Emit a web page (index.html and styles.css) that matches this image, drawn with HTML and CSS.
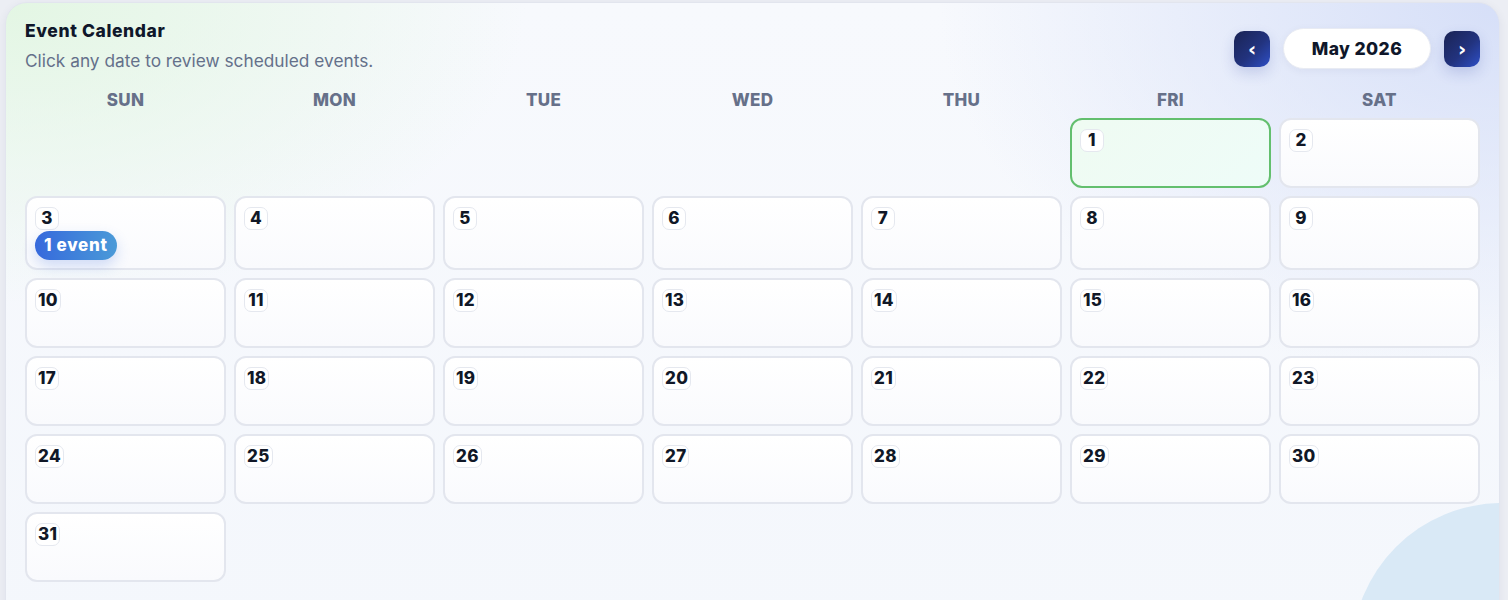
FILE: index.html
```html
<!DOCTYPE html>
<html lang="en">
<head>
<meta charset="utf-8">
<title>Event Calendar</title>
<link rel="stylesheet" href="styles.css">
</head>
<body>
<div class="card">
  <div class="blob"></div>
  <div class="header">
    <div class="titles">
      <div class="title">Event Calendar</div>
      <div class="subtitle">Click any date to review scheduled events.</div>
    </div>
    <div class="nav">
      <button class="navbtn" aria-label="Previous month">‹</button>
      <div class="month">May 2026</div>
      <button class="navbtn" aria-label="Next month">›</button>
    </div>
  </div>
  <div class="weekdays">
    <div>SUN</div><div>MON</div><div>TUE</div><div>WED</div><div>THU</div><div>FRI</div><div>SAT</div>
  </div>
  <div class="grid">
    <div class="empty"></div><div class="empty"></div><div class="empty"></div><div class="empty"></div><div class="empty"></div>
    <div class="day today"><span class="num">1</span></div>
    <div class="day"><span class="num">2</span></div>
    <div class="day"><span class="num">3</span><span class="badge">1 event</span></div>
    <div class="day"><span class="num">4</span></div>
    <div class="day"><span class="num">5</span></div>
    <div class="day"><span class="num">6</span></div>
    <div class="day"><span class="num">7</span></div>
    <div class="day"><span class="num">8</span></div>
    <div class="day"><span class="num">9</span></div>
    <div class="day"><span class="num">10</span></div>
    <div class="day"><span class="num">11</span></div>
    <div class="day"><span class="num">12</span></div>
    <div class="day"><span class="num">13</span></div>
    <div class="day"><span class="num">14</span></div>
    <div class="day"><span class="num">15</span></div>
    <div class="day"><span class="num">16</span></div>
    <div class="day"><span class="num">17</span></div>
    <div class="day"><span class="num">18</span></div>
    <div class="day"><span class="num">19</span></div>
    <div class="day"><span class="num">20</span></div>
    <div class="day"><span class="num">21</span></div>
    <div class="day"><span class="num">22</span></div>
    <div class="day"><span class="num">23</span></div>
    <div class="day"><span class="num">24</span></div>
    <div class="day"><span class="num">25</span></div>
    <div class="day"><span class="num">26</span></div>
    <div class="day"><span class="num">27</span></div>
    <div class="day"><span class="num">28</span></div>
    <div class="day"><span class="num">29</span></div>
    <div class="day"><span class="num">30</span></div>
    <div class="day"><span class="num">31</span></div>
  </div>
</div>
</body>
</html>
```
FILE: styles.css
```css
* { box-sizing: border-box; }
html, body { margin: 0; padding: 0; }
body {
  background: #eceef4;
  font-family: "Inter", "Noto Sans", sans-serif;
  color: #111827;
  height: 600px;
  overflow: hidden;
}
.card {
  position: relative;
  margin: 2px 8px 0 5px;
  height: 640px;
  border-radius: 22px;
  border: 1px solid #e2e5ee;
  overflow: hidden;
  padding: 15px 19px 0 19px;
  background:
    radial-gradient(ellipse 520px 300px at 0% 0%, rgba(226, 246, 226, 0.95), rgba(226, 246, 226, 0) 100%),
    radial-gradient(ellipse 560px 380px at 100% 0%, rgba(214, 223, 248, 1), rgba(214, 223, 248, 0) 100%),
    linear-gradient(180deg, #f7f9fd, #f4f7fc);
  box-shadow: 0 2px 10px rgba(30, 40, 80, 0.06);
}
.blob {
  position: absolute;
  width: 300px;
  height: 300px;
  border-radius: 50%;
  right: -153px;
  top: 500px;
  background: #d9e9f6;
  z-index: 0;
}
.header {
  position: relative;
  z-index: 1;
  display: flex;
  justify-content: space-between;
  align-items: flex-start;
  height: 71px;
}
.title {
  font-size: 17.5px;
  font-weight: 800;
  letter-spacing: 0.6px;
  line-height: 26px;
  color: #0f172a;
}
.subtitle {
  margin-top: 6px;
  font-size: 17.3px;
  line-height: 22px;
  color: #64708a;
}
.nav {
  display: flex;
  align-items: center;
  gap: 13px;
  margin-top: 10px;
}
.navbtn {
  width: 36px;
  height: 36px;
  border: none;
  border-radius: 10px;
  background: linear-gradient(135deg, #1a2354 0%, #22337e 55%, #2e4fc6 100%);
  color: #fff;
  font-family: "DejaVu Sans", sans-serif;
  font-size: 20px;
  font-weight: 700;
  line-height: 36px;
  padding: 0 0 3px 0;
  box-shadow: 0 6px 14px rgba(40, 60, 160, 0.18);
}
.month {
  width: 148px;
  height: 41px;
  border-radius: 21px;
  background: #fff;
  border: 1px solid #e8ebf3;
  display: flex;
  align-items: center;
  justify-content: center;
  font-size: 17.5px;
  font-weight: 800;
  letter-spacing: 0.4px;
  color: #0f172a;
  box-shadow: 0 2px 8px rgba(30, 40, 80, 0.05);
}
.weekdays {
  position: relative;
  z-index: 1;
  display: grid;
  grid-template-columns: repeat(7, 1fr);
  column-gap: 8px;
  height: 29px;
  align-items: start;
}
.weekdays div {
  text-align: center;
  font-size: 17px;
  font-weight: 800;
  letter-spacing: 0.3px;
  color: #667089;
  line-height: 22px;
}
.grid {
  position: relative;
  z-index: 1;
  display: grid;
  grid-template-columns: repeat(7, 1fr);
  gap: 8px;
}
.day {
  min-height: 70px;
  border: 2px solid #e3e6ee;
  border-radius: 12px;
  background: linear-gradient(180deg, #ffffff 0%, #f9fafd 100%);
  padding: 9px 8px 8px 8px;
  display: flex;
  flex-direction: column;
  align-items: flex-start;
}
.day.today {
  border-color: #63bf6e;
  background: linear-gradient(135deg, #effbf2 0%, #eefcf8 100%);
}
.num {
  min-width: 24px;
  height: 23px;
  padding: 0 2px;
  border: 1px solid #e5e8ef;
  border-radius: 7px;
  background: #fff;
  font-size: 17px;
  font-weight: 800;
  letter-spacing: 0.3px;
  line-height: 21px;
  text-align: center;
  color: #111827;
}
.badge {
  margin-top: 1px;
  height: 29px;
  padding: 0 9px;
  border-radius: 15px;
  background: linear-gradient(90deg, #3669dc 0%, #4a9ad8 100%);
  color: #fff;
  font-size: 17px;
  font-weight: 800;
  letter-spacing: 0.7px;
  line-height: 29px;
  box-shadow: 0 6px 14px rgba(54, 105, 220, 0.22);
}
```
